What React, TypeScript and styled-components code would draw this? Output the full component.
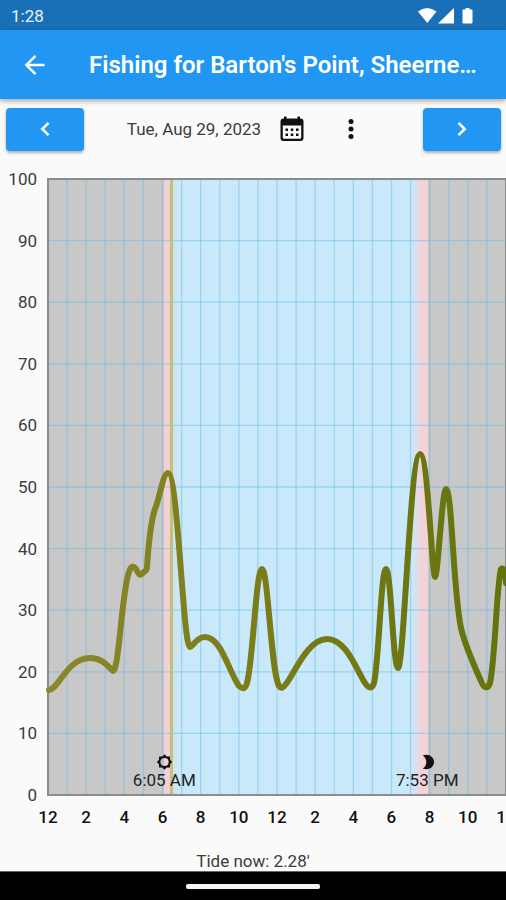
import React from "react";
import styled, { createGlobalStyle } from "styled-components";

const GlobalStyle = createGlobalStyle`
  * { box-sizing: border-box; }
  body {
    margin: 0;
    background: #fafafa;
    color: #3c3c3c;
    font-family: Roboto, "Open Sans", sans-serif;
    font-size: 17px;
    line-height: 20px;
  }
`;

const Screen = styled.div`
  display: flex;
  flex-direction: column;
  min-height: 100vh;
  overflow: hidden;
`;

const StatusBar = styled.header`
  display: flex;
  align-items: center;
  justify-content: space-between;
  height: 30px;
  padding: 2px 32px 0 11px;
  background: #1a70b7;
  color: #e8f3fc;
`;

const StatusIcons = styled.svg`
  display: block;
  width: 56px;
  height: 18px;
`;

const AppBar = styled.div`
  display: flex;
  align-items: center;
  gap: 41px;
  height: 69px;
  padding: 0 16px 0 22px;
  background: #2196f3;
  color: #fff;
  box-shadow: 0 2px 5px rgba(0, 0, 0, 0.35);
  z-index: 1;
`;

const IconButton = styled.button`
  display: grid;
  place-items: center;
  flex: none;
  width: 26px;
  height: 28px;
  padding: 0;
  border: 0;
  background: none;
  color: inherit;
  cursor: pointer;
`;

const Title = styled.h1`
  margin: 0;
  min-width: 0;
  overflow: hidden;
  white-space: nowrap;
  font-size: 24px;
  line-height: 32px;
  font-weight: 600;
`;

const DateBar = styled.div`
  display: flex;
  align-items: center;
  justify-content: space-between;
  height: 60px;
  padding: 0 5px 0 6px;
`;

const StepButton = styled.button`
  display: grid;
  place-items: center;
  width: 78px;
  height: 43px;
  padding: 0;
  border: 0;
  border-radius: 4px;
  background: #2196f3;
  color: #fff;
  box-shadow: 0 2px 3px rgba(0, 0, 0, 0.3);
  cursor: pointer;
`;

const DateGroup = styled.div`
  display: flex;
  align-items: center;
  color: #111;
`;

const DateText = styled.span`
  margin-right: 18px;
  color: #3c3c3c;
`;

const MenuSlot = styled.div`
  display: flex;
  margin-left: 33px;
  margin-right: 16px;
`;

const Chart = styled.main`
  flex: 1;
  display: grid;
  grid-template-columns: 48px 1fr;
  grid-template-rows: 1fr 44px;
  min-height: 480px;
  padding-top: 20px;
`;

const YAxis = styled.div`
  display: flex;
  flex-direction: column;
  justify-content: space-between;
  margin: -10px 0;
  padding-right: 11px;
  text-align: right;
`;

const Plot = styled.div`
  position: relative;
  min-height: 0;
`;

const PlotDrawing = styled.svg`
  position: absolute;
  inset: 0;
  width: 100%;
  height: 100%;
  overflow: visible;
`;

const Marker = styled.div<{ $at: number }>`
  position: absolute;
  bottom: 5px;
  left: ${(p) => p.$at}%;
  display: flex;
  flex-direction: column;
  align-items: center;
  transform: translateX(-50%);
  white-space: nowrap;
  color: #222;
`;

const XAxis = styled.div`
  grid-column: 2;
  display: flex;
  justify-content: space-between;
  padding-top: 12px;
  font-weight: 500;
  color: #111;
`;

const Tick = styled.span`
  display: flex;
  justify-content: center;
  width: 0;
`;

const TideNow = styled.p`
  margin: 0;
  padding: 12px 0 0;
  height: 32px;
  text-align: center;
`;

const NavBar = styled.footer`
  display: grid;
  place-items: center;
  height: 29px;
  border-top: 1px solid #666;
  background: #000;
`;

const HomeHandle = styled.div`
  width: 134px;
  height: 5px;
  border-radius: 2px;
  background: #f4f4f4;
`;

const Y_LABELS = [100, 90, 80, 70, 60, 50, 40, 30, 20, 10, 0];
const X_LABELS = [12, 2, 4, 6, 8, 10, 12, 2, 4, 6, 8, 10, 12];
const WIDTH = 458;
const HEIGHT = 616;

const CURVE =
  "M1 511 C11 510 19 479 42 479 C54 479 60 487 65 492 C71 492 74 410 81 393 " +
  "C83 386 86 387 88 390 C91 396 92 397 95 394 C97 391 99 393 99 388 " +
  "C101 358 103 342 107 330 C112 318 115 294 120 294 C130 294 135 468 142 468 " +
  "C145 467 149 458 157 458 C173 458 181 493 191 507 C194 510 197 511 199 504 " +
  "C205 483 208 390 214 390 C220 390 223 493 231 507 C233 510 235 509 238 505 " +
  "C247 493 260 460 279 460 C298 460 308 490 317 504 C321 510 324 510 326 504 " +
  "C331 482 333 390 338 390 C343 390 345 489 350 489 C356 489 362 275 372 275 " +
  "C380 275 384 398 387 398 C390 398 394 310 398 310 C404 310 405 412 413 449 " +
  "C415 458 424 482 433 502 C436 510 440 510 442 504 C447 483 449 400 453 390 " +
  "C455 388 457 391 458 404";

const ForecastDrawing = () => (
  <PlotDrawing
    viewBox={`0 0 ${WIDTH} ${HEIGHT}`}
    preserveAspectRatio="none"
    role="img"
    aria-label="Fishing forecast by hour"
  >
    <defs>
      <linearGradient id="dawn">
        <stop offset="0" stopColor="#d9dfe2" />
        <stop offset="1" stopColor="#c9e9fa" />
      </linearGradient>
      <linearGradient id="dusk">
        <stop offset="0" stopColor="#c9e9fa" />
        <stop offset="0.6" stopColor="#f2d2d7" />
        <stop offset="1" stopColor="#f5d3d4" />
      </linearGradient>
      <linearGradient id="activity" gradientUnits="userSpaceOnUse" x1="0" y1="0" x2={WIDTH} y2="0">
        <stop offset="0" stopColor="#8b872d" />
        <stop offset="0.4" stopColor="#7d7d1b" />
        <stop offset="1" stopColor="#64730d" />
      </linearGradient>
    </defs>
    <rect width={WIDTH} height={HEIGHT} fill="#c9e9fa" />
    <rect width="116" height={HEIGHT} fill="#c8c8c9" />
    <rect x="124" width="7" height={HEIGHT} fill="url(#dawn)" />
    <rect x="116" width="6" height={HEIGHT} fill="#f5d0d3" />
    <rect x="364" width="16" height={HEIGHT} fill="url(#dusk)" />
    <rect x="380" width="78" height={HEIGHT} fill="#c8c8c9" />
    <g stroke="#5fb9e8" strokeOpacity="0.45" strokeWidth="1.3">
      {Array.from({ length: 23 }, (_, i) => {
        const x = ((i + 1) * WIDTH) / 24;
        return <line key={i} x1={x} x2={x} y1="0" y2={HEIGHT} vectorEffect="non-scaling-stroke" />;
      })}
      {Array.from({ length: 9 }, (_, i) => {
        const y = ((i + 1) * HEIGHT) / 10;
        return <line key={i} x1="0" x2={WIDTH} y1={y} y2={y} vectorEffect="non-scaling-stroke" />;
      })}
    </g>
    <rect x="122" width="3" height={HEIGHT} fill="#b9c47c" />
    <rect
      width={WIDTH}
      height={HEIGHT}
      fill="none"
      stroke="#8c8c8c"
      strokeWidth="2"
      vectorEffect="non-scaling-stroke"
    />
    <path
      d={CURVE}
      fill="none"
      stroke="url(#activity)"
      strokeWidth="6"
      strokeLinecap="round"
      strokeLinejoin="round"
      vectorEffect="non-scaling-stroke"
    />
  </PlotDrawing>
);

const Chevron = ({ d }: { d: string }) => (
  <svg width="24" height="24" viewBox="0 0 24 24" fill="none" stroke="currentColor" strokeWidth="2.6">
    <path d={d} />
  </svg>
);

const CalendarIcon = () => (
  <svg width="26" height="28" viewBox="0 0 26 28">
    <path
      fill="currentColor"
      fillRule="evenodd"
      d="M5 1.500h2.500v2h11v-2H21v2h.5a3 3 0 0 1 3 3v16.500a3 3 0 0 1-3 3h-17a3 3 0 0 1-3-3V6.500a3 3 0 0 1 3-3H5zM3.800 10.500v12a1.200 1.200 0 0 0 1.200 1.200h16a1.200 1.200 0 0 0 1.200-1.200v-12z"
    />
    {[13.5, 18.500].map((y) =>
      [6.5, 11.800, 17].map((x) => <rect key={`${x}-${y}`} x={x} y={y} width="2.5" height="2.5" fill="currentColor" />)
    )}
  </svg>
);

const SunIcon = () => (
  <svg width="16" height="16" viewBox="0 0 16 16">
    <path
      fill="#111"
      fillRule="evenodd"
      d="M8 .3 10.200 2.500H13.500V5.800L15.700 8l-2.200 2.200v3.300h-3.300L8 15.700l-2.200-2.200H2.500v-3.300L.3 8l2.200-2.200V2.500h3.300zM8 3.900a4.100 4.100 0 1 0 0 8.200 4.100 4.100 0 0 0 0-8.200z"
    />
  </svg>
);

const MoonIcon = () => (
  <svg width="16" height="16" viewBox="0 0 16 16">
    <path fill="#111" d="M3 1.500C9.500-1 14.300 3.500 14.300 8S9.500 17 3 14.500C7.800 11.500 7.800 4.500 3 1.500z" />
  </svg>
);

export default function App() {
  return (
    <Screen>
      <GlobalStyle />
      <StatusBar>
        <time>1:28</time>
        <StatusIcons viewBox="0 0 56 18" fill="#fff" aria-hidden="true">
          <path d="M0 4.500Q9 -2.500 18.500 4.500L9.300 16z" />
          <path d="M36 1v15.500H20z" />
          <path d="M47.500 1h4v1.500h2q1 0 1 1v12q0 1-1 1h-8q-1 0-1-1v-12q0-1 1-1h2z" />
        </StatusIcons>
      </StatusBar>
      <AppBar>
        <IconButton aria-label="Back">
          <svg width="26" height="26" viewBox="0 0 26 26" fill="none" stroke="currentColor" strokeWidth="2.400">
            <path d="M22.500 13H5M13.500 3.800 4.300 13l9.200 9.200" />
          </svg>
        </IconButton>
        <Title>Fishing for Barton's Point, Sheerne…</Title>
      </AppBar>
      <DateBar>
        <StepButton aria-label="Previous day">
          <Chevron d="M15.500 5.800 9.300 12l6.200 6.200" />
        </StepButton>
        <DateGroup>
          <DateText>Tue, Aug 29, 2023</DateText>
          <IconButton aria-label="Choose date">
            <CalendarIcon />
          </IconButton>
          <MenuSlot>
            <IconButton aria-label="More options">
              <svg width="26" height="26" viewBox="0 0 26 26" fill="currentColor">
                <circle cx="13" cy="5.500" r="2.500" />
                <circle cx="13" cy="13" r="2.500" />
                <circle cx="13" cy="20.500" r="2.500" />
              </svg>
            </IconButton>
          </MenuSlot>
        </DateGroup>
        <StepButton aria-label="Next day">
          <Chevron d="M8.500 5.800 14.700 12l-6.200 6.200" />
        </StepButton>
      </DateBar>
      <Chart>
        <YAxis>
          {Y_LABELS.map((n) => (
            <span key={n}>{n}</span>
          ))}
        </YAxis>
        <Plot>
          <ForecastDrawing />
          <Marker $at={25.4}>
            <SunIcon />
            <span>6:05 AM</span>
          </Marker>
          <Marker $at={82.8}>
            <MoonIcon />
            <span>7:53 PM</span>
          </Marker>
        </Plot>
        <XAxis>
          {X_LABELS.map((n, i) => (
            <Tick key={i}>{n}</Tick>
          ))}
        </XAxis>
      </Chart>
      <TideNow>Tide now: 2.28'</TideNow>
      <NavBar>
        <HomeHandle />
      </NavBar>
    </Screen>
  );
}
